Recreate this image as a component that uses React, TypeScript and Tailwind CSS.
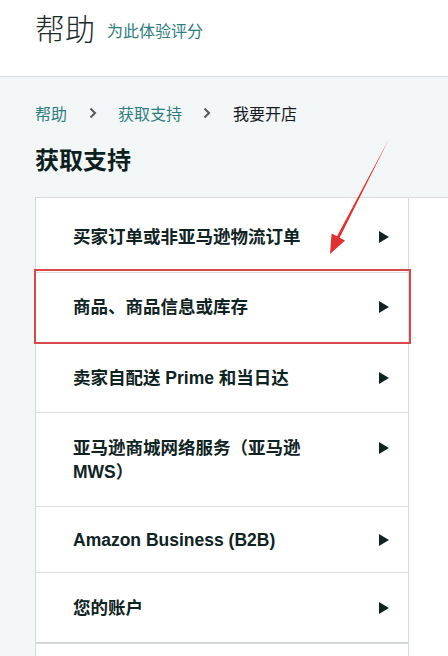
import React from 'react';

type Topic = {
  label: string;
  highlighted?: boolean;
  pad: string;
};

const topics: Topic[] = [
  { label: '买家订单或非亚马逊物流订单', pad: 'pt-[22px] pb-[23px]' },
  { label: '商品、商品信息或库存', highlighted: true, pad: 'pt-[22px] pb-[24px]' },
  { label: '卖家自配送 Prime 和当日达', pad: 'pt-[22px] pb-[22px]' },
  { label: '亚马逊商城网络服务（亚马逊 MWS）', pad: 'pt-[23px] pb-[22px]' },
  { label: 'Amazon Business (B2B)', pad: 'pt-[21px] pb-[20px]' },
  { label: '您的账户', pad: 'pt-[23px] pb-[22px]' },
];

const cjk = { fontFamily: '"Noto Sans CJK SC", "Noto Sans", sans-serif' };
const mixed = { fontFamily: '"Liberation Sans", "Noto Sans CJK SC", sans-serif' };

const Chevron = () => (
  <svg width="8" height="12" viewBox="0 0 8 12" className="shrink-0">
    <path d="M1.5 1.5 L6 6 L1.5 10.5" fill="none" stroke="#565959" strokeWidth="2" />
  </svg>
);

const PlayArrow = () => (
  <svg width="10" height="12" viewBox="0 0 10 12" className="shrink-0 mt-[6px]">
    <path d="M0 0 L10 6 L0 12 Z" fill="#0f2323" />
  </svg>
);

export default function App() {
  return (
    <div className="relative h-[656px] overflow-hidden flex flex-col bg-[#f3f6f6]" style={cjk}>
      {/* Header */}
      <header className="h-[77px] shrink-0 bg-white border-b border-[#d5d9d9] flex items-center pl-[35px] pb-[22px]">
        <h1 className="text-[30px] leading-[40px] font-light text-[#1b2b2b]">帮助</h1>
        <a className="ml-[12px] mt-[6px] text-[16px] leading-[24px] text-[#2e7d7d]">为此体验评分</a>
      </header>

      {/* Breadcrumb + title */}
      <main className="flex-1 flex flex-col">
        <nav className="flex items-center pl-[35px] pt-[24px] text-[16px] leading-[24px]">
          <span className="text-[#2e7d7d]">帮助</span>
          <span className="ml-[22px] mr-[21px]"><Chevron /></span>
          <span className="text-[#2e7d7d]">获取支持</span>
          <span className="ml-[21px] mr-[22px]"><Chevron /></span>
          <span className="text-[#16191f]">我要开店</span>
        </nav>

        <h2 className="pl-[35px] mt-[18px] text-[24px] leading-[32px] font-bold text-[#0f1f1f]">获取支持</h2>

        {/* Topic list */}
        <div className="mt-[22px] ml-[35px] flex-1 flex bg-white border-t border-l border-[#d5dbdb]">
          <ul className="w-[373px] border-r border-[#d5dbdb] pt-[5px]">
            {topics.map((topic, index) => (
              <li
                key={index}
                className={`relative flex items-start justify-between pl-[37px] pr-[19px] ${topic.pad} ${
                  index === topics.length - 1 ? 'border-b-2 border-[#d3d7d7]' : 'border-b border-[#dcdfdf]'
                }`}
              >
                <span
                  className="w-[236px] text-[17.5px] leading-[24px] font-bold text-[#0f2323]"
                  style={mixed}
                >
                  {topic.label}
                </span>
                <PlayArrow />
                {topic.highlighted && (
                  <span className="absolute top-[-4px] bottom-[-1px] left-[-2px] right-[-3px] border-2 border-[#d9474b] pointer-events-none" />
                )}
              </li>
            ))}
          </ul>
          <div className="flex-1" />
        </div>
      </main>

      {/* Red pointer arrow */}
      <svg className="absolute left-0 top-0 pointer-events-none" width="448" height="656" viewBox="0 0 448 656">
        <polygon
          points="389,139 339.6,237.7 345,240.5 330,254 331.6,233.6 337,236.3"
          fill="#e2302f"
        />
      </svg>
    </div>
  );
}
